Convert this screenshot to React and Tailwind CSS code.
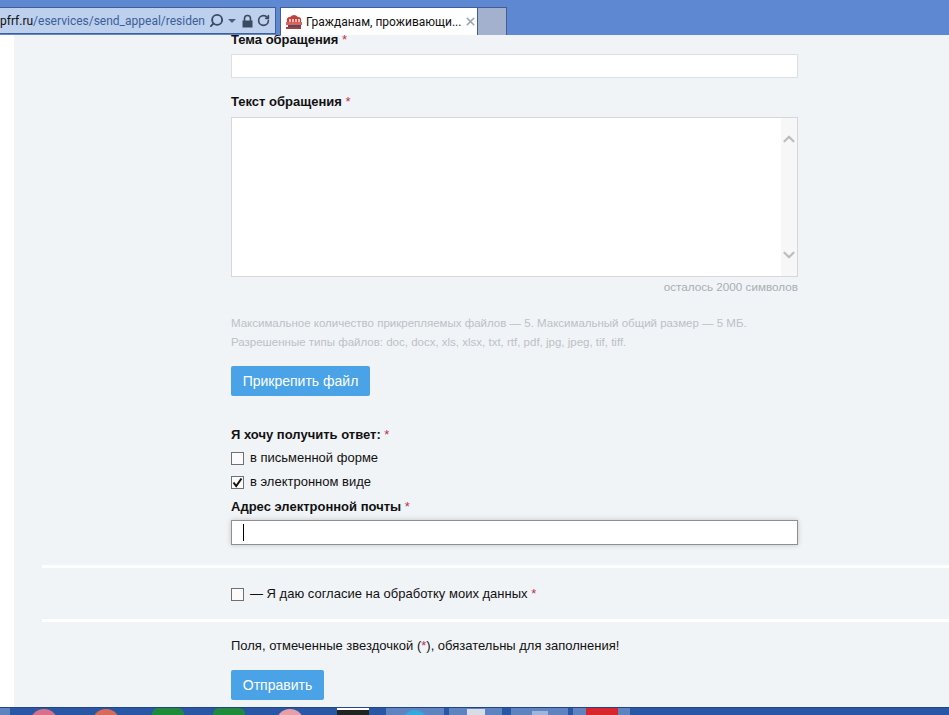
import { Search, RotateCw, X, ChevronUp, ChevronDown } from 'lucide-react'

const Star = () => <span className="text-[#c0304a] font-normal"> *</span>

const Box = ({ checked }) => (
  <span className="w-[13px] h-[13px] border border-[#707070] bg-[#fbfbfb] shrink-0 flex items-center justify-center">
    {checked && (
      <svg width="11" height="11" viewBox="0 0 11 11">
        <path d="M1.5 5.5 L4.2 9 L9.5 1.5" fill="none" stroke="#111" strokeWidth="2" />
      </svg>
    )}
  </span>
)

const App = () => {
  return (
    <div className="w-[949px] h-[715px] overflow-hidden flex flex-col bg-white font-['Liberation_Sans',Arial,sans-serif] text-[13px] text-[#111]">
      {/* browser chrome */}
      <header className="h-[35px] shrink-0 bg-[#5f88d2] flex items-end font-['Roboto',sans-serif]">
        <div className="w-[276px] h-[27px] mb-[1px] bg-[#bdd0ee] border border-l-0 border-[#3f5f94] flex items-center overflow-hidden">
          <div className="w-[205px] shrink-0 overflow-hidden whitespace-nowrap text-[12px] text-[#3c5f96] flex justify-end">
            <span className="text-[#111]">v.pfrf.ru</span>
            <span>/eservices/send_appeal/residen</span>
          </div>
          <Search size={15} strokeWidth={3} className="ml-[4px] -scale-x-100 text-[#3a4a60]" />
          <span className="ml-[4px] border-x-[4px] border-t-[4px] border-x-transparent border-t-[#4a5f80]" />
          <svg width="13" height="14" viewBox="0 0 13 14" className="ml-[5px] shrink-0">
            <path d="M3.5 7 V4.5 a3 3 0 0 1 6 0 V7" fill="none" stroke="#3a4a60" strokeWidth="1.6" />
            <rect x="1.5" y="6.5" width="10" height="7" fill="#3a4a60" />
          </svg>
          <RotateCw size={13} strokeWidth={3} className="ml-[3px] text-[#3a4a60]" />
        </div>
        <div className="ml-[4px] w-[198px] h-[28px] bg-white border border-b-0 border-[#3f5f94] flex items-center pl-[4px] text-[12px] whitespace-nowrap">
          <svg width="18" height="18" viewBox="0 0 18 18" className="shrink-0">
            <path d="M2 9 Q1 4 5 4 Q9 0 13 4 Q17 4 16 9 Z" fill="#c6403a" />
            <path d="M5 6 V9 M8 6 V9 M11 6 V9 M14 6 V9" stroke="#fff" strokeWidth="1.3" />
            <rect x="1" y="9" width="16" height="3" fill="#e0605a" />
            <rect x="3" y="12" width="13" height="2" fill="#46506a" />
            <rect x="1" y="14" width="15" height="2" fill="#b23a36" />
          </svg>
          <span className="ml-[3px] w-[155px] shrink-0 overflow-hidden">Гражданам, проживающи...</span>
          <X size={13} strokeWidth={3} className="ml-[3px] text-[#9aa4b0]" />
        </div>
        <div className="w-[29px] h-[28px] bg-[#a3b1cf] border-r border-t border-[#3f5f94]" />
      </header>

      {/* page */}
      <main className="flex-1 min-h-0 ml-[14px] bg-[#f1f4f7] overflow-hidden pl-[217px] flex flex-col">
        <div className="-mt-[3px] h-[16px] leading-[16px] font-bold">Тема обращения<Star /></div>
        <div className="mt-[6px] w-[567px] h-[24px] bg-white border border-[#dcdfe3] shrink-0" />

        <div className="mt-[16px] h-[16px] leading-[16px] font-bold">Текст обращения<Star /></div>
        <div className="mt-[7px] w-[567px] h-[160px] bg-white border border-[#d4d7db] flex justify-end shrink-0">
          <div className="w-[16px] bg-[#f7f7f7] flex flex-col items-center justify-between py-[12px] text-[#bcbfc2]">
            <ChevronUp size={18} strokeWidth={3} />
            <ChevronDown size={18} strokeWidth={3} />
          </div>
        </div>
        <div className="w-[567px] mt-[3px] text-right text-[11.7px] leading-[14px] text-[#a9aeb3]">осталось 2000 символов</div>

        <div className="mt-[20px] text-[11.5px] leading-[19px] text-[#bcc1c6]">
          <div>Максимальное количество прикрепляемых файлов — 5. Максимальный общий размер — 5 МБ.</div>
          <div>Разрешенные типы файлов: doc, docx, xls, xlsx, txt, rtf, pdf, jpg, jpeg, tif, tiff.</div>
        </div>

        <button className="mt-[14px] w-[139px] h-[30px] bg-[#4aa3e6] rounded-[2px] text-white text-[14px] shrink-0">Прикрепить файл</button>

        <div className="mt-[31px] h-[16px] leading-[16px] font-bold">Я хочу получить ответ:<Star /></div>
        <label className="mt-[7px] h-[16px] flex items-center gap-[6px]"><Box /><span>в письменной форме</span></label>
        <label className="mt-[8px] h-[16px] flex items-center gap-[6px]"><Box checked /><span>в электронном виде</span></label>
        <div className="mt-[9px] h-[16px] leading-[16px] font-bold">Адрес электронной почты<Star /></div>
        <div className="mt-[5px] w-[567px] h-[25px] bg-white border border-[#8f8f8f] shadow-[0_0_5px_rgba(0,0,0,0.2)] flex items-center pl-[11px] shrink-0">
          <span className="w-[1px] h-[17px] bg-black" />
        </div>

        <div className="-ml-[189px] mt-[20px] h-[3px] bg-white shrink-0" />
        <label className="mt-[18px] h-[16px] flex items-center gap-[6px]"><Box /><span>— Я даю согласие на обработку моих данных<Star /></span></label>
        <div className="-ml-[189px] mt-[17px] h-[3px] bg-white shrink-0" />
        <div className="mt-[16px] h-[16px] leading-[16px]">Поля, отмеченные звездочкой (<span className="text-[#c0304a]">*</span>), обязательны для заполнения!</div>
        <button className="mt-[16px] w-[93px] h-[30px] bg-[#4aa3e6] rounded-[2px] text-white text-[14px] shrink-0">Отправить</button>
      </main>

      {/* taskbar */}
      <footer className="h-[8px] shrink-0 bg-[#2a56a6] border-t border-[#1f4488] flex items-start overflow-hidden">
        <div className="w-[10px] h-[8px] bg-[#5f82c0]" />
        <div className="ml-[20px] mt-[1px] w-[28px] h-[28px] rounded-full bg-[#d8708a]" />
        <div className="ml-[34px] mt-[1px] w-[28px] h-[28px] rounded-full bg-[#d86a5a]" />
        <div className="ml-[32px] w-[32px] h-[28px] rounded-[6px] bg-[#1f8a3c]" />
        <div className="ml-[29px] w-[32px] h-[28px] rounded-[6px] bg-[#1f8a3c]" />
        <div className="ml-[31px] mt-[1px] w-[28px] h-[28px] rounded-full bg-[#e8a0a8]" />
        <div className="ml-[33px] w-[32px] h-[28px] bg-[#222] border-t-2 border-white" />
        <div className="ml-[17px] w-[58px] h-[8px] bg-[#5f82c0] flex justify-center">
          <div className="mt-[2px] w-[26px] h-[26px] rounded-full bg-[#35a8e0]" />
        </div>
        <div className="ml-[5px] w-[53px] h-[8px] bg-[#5f82c0] flex justify-center">
          <div className="mt-[1px] w-[18px] h-[18px] bg-[#d8dce4]" />
        </div>
        <div className="ml-[9px] w-[57px] h-[8px] bg-[#5f82c0] flex justify-center">
          <div className="mt-[3px] w-[16px] h-[16px] bg-[#9fb4d8]" />
        </div>
        <div className="ml-[5px] w-[57px] h-[8px] bg-[#5f82c0] flex justify-center">
          <div className="w-[32px] h-[8px] bg-[#d8242c]" />
        </div>
      </footer>
    </div>
  )
}

export default App
